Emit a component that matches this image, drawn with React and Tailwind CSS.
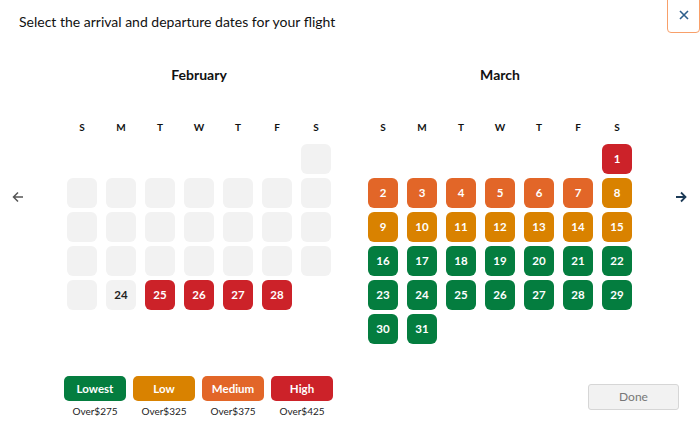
import React from 'react';

const tone = {
  empty: 'bg-[#f2f2f2] text-[#222]',
  lowest: 'bg-[#047d3f] text-white',
  low: 'bg-[#d98200] text-white',
  medium: 'bg-[#e26628] text-white',
  high: 'bg-[#cc2229] text-white',
};

const weekdays = ['S', 'M', 'T', 'W', 'T', 'F', 'S'];

// February 2025 starts on a Saturday; only the last week has fares
const febDays = [
  ...Array(6).fill(null),
  ...Array.from({ length: 28 }, (_, i) => {
    const d = i + 1;
    if (d === 24) return { day: d, show: true, level: 'empty' };
    if (d >= 25) return { day: d, show: true, level: 'high' };
    return { day: d, show: false, level: 'empty' };
  }),
];

const marchLevel = (d) => {
  if (d === 1) return 'high';
  if (d <= 7) return 'medium';
  if (d <= 15) return 'low';
  return 'lowest';
};

const marchDays = [
  ...Array(6).fill(null),
  ...Array.from({ length: 31 }, (_, i) => ({ day: i + 1, show: true, level: marchLevel(i + 1) })),
];

const legend = [
  { label: 'Lowest', price: 'Over$275', level: 'lowest' },
  { label: 'Low', price: 'Over$325', level: 'low' },
  { label: 'Medium', price: 'Over$375', level: 'medium' },
  { label: 'High', price: 'Over$425', level: 'high' },
];

function Month({ name, days }) {
  return (
    <div className="w-[264px]">
      <h2 className="text-center text-[14px] font-bold leading-[20px] text-[#111]">{name}</h2>
      <div className="mt-[35px] grid grid-cols-7 gap-x-[9px]">
        {weekdays.map((w, i) => (
          <div key={i} className="text-center text-[10px] font-bold leading-[14px] text-[#111]">
            {w}
          </div>
        ))}
      </div>
      <div className="mt-[10px] grid grid-cols-7 gap-x-[9px] gap-y-[4px]">
        {days.map((d, i) =>
          d ? (
            <div
              key={i}
              className={`flex h-[30px] w-[30px] items-center justify-center rounded-[6px] text-[11.5px] font-bold ${tone[d.level]}`}
            >
              {d.show ? d.day : ''}
            </div>
          ) : (
            <div key={i} className="h-[30px] w-[30px]" />
          )
        )}
      </div>
    </div>
  );
}

export default function App() {
  return (
    <div
      className="relative h-[434px] w-[700px] overflow-hidden bg-white text-[#111]"
      style={{ fontFamily: 'Lato, "Noto Sans", sans-serif' }}
    >
      <h1 className="px-[19px] pt-[11px] text-[14px] leading-[22px] text-[#111]">
        Select the arrival and departure dates for your flight
      </h1>

      <button className="absolute right-0 top-[-3px] flex h-[36px] w-[33px] items-center justify-center rounded-b-[4px] border-[1.5px] border-[#f8a06a] text-[#2d5f8c]">
        <svg width="10" height="10" viewBox="0 0 10 10" fill="none" stroke="currentColor" strokeWidth="1.6">
          <path d="M1 1l8 8M9 1l-8 8" />
        </svg>
      </button>

      <div className="mt-[32px] flex">
        <div className="flex w-[67px] items-start pl-[12px] pt-[126px]">
          <svg width="12" height="12" viewBox="0 0 12 12" fill="none" stroke="#555" strokeWidth="1.5">
            <path d="M11 6H1.5M6 1.5L1.5 6 6 10.5" />
          </svg>
        </div>
        <Month name="February" days={febDays} />
        <div className="w-[37px]" />
        <Month name="March" days={marchDays} />
        <div className="flex items-start pl-[43px] pt-[126px]">
          <svg width="12" height="12" viewBox="0 0 12 12" fill="none" stroke="#1d3b57" strokeWidth="1.8">
            <path d="M1 6h9.5M6 1.5L10.5 6 6 10.5" />
          </svg>
        </div>
      </div>

      <div className="absolute bottom-0 left-0 right-0 flex items-start justify-between pl-[64px] pr-[21px] pb-[15px]">
        <div className="flex gap-[7px]">
          {legend.map((l) => (
            <div key={l.label} className="flex w-[62px] flex-col items-center">
              <div
                className={`flex h-[25px] w-[62px] items-center justify-center rounded-[5px] text-[11.5px] font-bold ${tone[l.level]}`}
              >
                {l.label}
              </div>
              <div className="mt-[2px] text-[10px] leading-[16px] text-[#222]">{l.price}</div>
            </div>
          ))}
        </div>
        <button className="mt-[8px] h-[26px] w-[91px] rounded-[3px] border border-[#d6d6d6] bg-[#f2f2f2] text-[12px] text-[#777]">
          Done
        </button>
      </div>
    </div>
  );
}
